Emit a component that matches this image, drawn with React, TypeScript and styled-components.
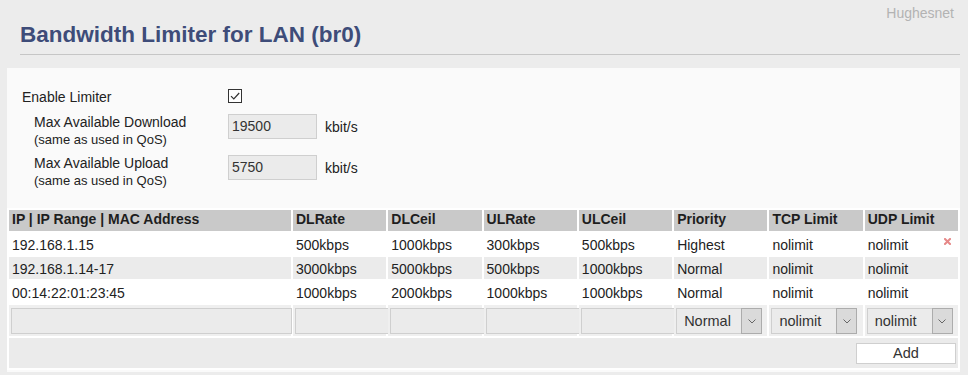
import { createGlobalStyle, styled } from 'styled-components';

const GlobalStyle = createGlobalStyle`
  html, body {
    margin: 0;
    padding: 0;
    background: #ececec;
  }
  body {
    font-family: 'Liberation Sans', Arial, sans-serif;
    color: #222;
  }
`;

type Rule = {
  address: string;
  dlRate: string;
  dlCeil: string;
  ulRate: string;
  ulCeil: string;
  priority: string;
  tcp: string;
  udp: string;
};

const rules: Rule[] = [
  { address: '192.168.1.15', dlRate: '500kbps', dlCeil: '1000kbps', ulRate: '300kbps', ulCeil: '500kbps', priority: 'Highest', tcp: 'nolimit', udp: 'nolimit' },
  { address: '192.168.1.14-17', dlRate: '3000kbps', dlCeil: '5000kbps', ulRate: '500kbps', ulCeil: '1000kbps', priority: 'Normal', tcp: 'nolimit', udp: 'nolimit' },
  { address: '00:14:22:01:23:45', dlRate: '1000kbps', dlCeil: '2000kbps', ulRate: '1000kbps', ulCeil: '1000kbps', priority: 'Normal', tcp: 'nolimit', udp: 'nolimit' },
];

const headings = ['IP | IP Range | MAC Address', 'DLRate', 'DLCeil', 'ULRate', 'ULCeil', 'Priority', 'TCP Limit', 'UDP Limit'];

function Chevron() {
  return (
    <svg width="8" height="5" viewBox="0 0 8 5">
      <path d="M0.5 0.5 L4 4 L7.5 0.5" fill="none" stroke="#666" strokeWidth="1" />
    </svg>
  );
}

function Check() {
  return (
    <svg width="12" height="12" viewBox="0 0 12 12">
      <path d="M2 6.2 L4.8 9 L10.2 3" fill="none" stroke="#333" strokeWidth="1.2" />
    </svg>
  );
}

function RemoveIcon() {
  return (
    <svg width="7" height="7" viewBox="0 0 7 7">
      <path d="M1 1 L6 6 M6 1 L1 6" stroke="#e68888" strokeWidth="2" strokeLinecap="square" />
    </svg>
  );
}

function Select({ value }: { value: string }) {
  return (
    <SelectBox>
      <SelectValue>{value}</SelectValue>
      <SelectArrow>
        <Chevron />
      </SelectArrow>
    </SelectBox>
  );
}

function App() {
  return (
    <Page>
      <GlobalStyle />
      <Header>
        <Brand>Hughesnet</Brand>
        <Title>Bandwidth Limiter for LAN (br0)</Title>
      </Header>

      <Panel>
        <Form>
          <FieldRow>
            <Label>Enable Limiter</Label>
            <CheckBox>
              <Check />
            </CheckBox>
          </FieldRow>
          <FieldRow $gap={7}>
            <Label $indent>
              Max Available Download
              <Hint>(same as used in QoS)</Hint>
            </Label>
            <Field>
              <NumberInput>19500</NumberInput>
              <Unit>kbit/s</Unit>
            </Field>
          </FieldRow>
          <FieldRow $gap={5}>
            <Label $indent>
              Max Available Upload
              <Hint>(same as used in QoS)</Hint>
            </Label>
            <Field>
              <NumberInput>5750</NumberInput>
              <Unit>kbit/s</Unit>
            </Field>
          </FieldRow>
        </Form>

        <RuleTable>
          <colgroup>
            <col style={{ width: 282 }} />
            {headings.slice(1).map((h) => (
              <col key={h} />
            ))}
          </colgroup>
          <thead>
            <tr>
              {headings.map((h) => (
                <HeadCell key={h}>{h}</HeadCell>
              ))}
            </tr>
          </thead>
          <tbody>
            {rules.map((r, i) => (
              <tr key={r.address}>
                <Cell $odd={i % 2 === 1}>{r.address}</Cell>
                <Cell $odd={i % 2 === 1}>{r.dlRate}</Cell>
                <Cell $odd={i % 2 === 1}>{r.dlCeil}</Cell>
                <Cell $odd={i % 2 === 1}>{r.ulRate}</Cell>
                <Cell $odd={i % 2 === 1}>{r.ulCeil}</Cell>
                <Cell $odd={i % 2 === 1}>{r.priority}</Cell>
                <Cell $odd={i % 2 === 1}>{r.tcp}</Cell>
                <Cell $odd={i % 2 === 1}>
                  <LastCellInner>
                    {r.udp}
                    {i === 0 && (
                      <Remove>
                        <RemoveIcon />
                      </Remove>
                    )}
                  </LastCellInner>
                </Cell>
              </tr>
            ))}
            <tr>
              {[0, 1, 2, 3, 4].map((k) => (
                <EditCell key={k}>
                  <TextBox $wide={k > 0} />
                </EditCell>
              ))}
              <EditCell>
                <Select value="Normal" />
              </EditCell>
              <EditCell>
                <Select value="nolimit" />
              </EditCell>
              <EditCell>
                <Select value="nolimit" />
              </EditCell>
            </tr>
            <tr>
              <ActionCell colSpan={8}>
                <AddButton>Add</AddButton>
              </ActionCell>
            </tr>
          </tbody>
        </RuleTable>
      </Panel>
    </Page>
  );
}

export default App;

const Page = styled.div`
  width: 968px;
  height: 375px;
  box-sizing: border-box;
  padding: 0 8px 0 7px;
  background: #ececec;
  overflow: hidden;
`;

const Header = styled.header`
  display: flex;
  flex-direction: column;
  padding-top: 5px;
  margin-bottom: 13px;
`;

const Brand = styled.div`
  align-self: flex-end;
  margin-right: 6px;
  font-size: 14px;
  line-height: 16px;
  color: #b3b3b3;
`;

const Title = styled.h1`
  margin: 1px 0 0 13px;
  padding-bottom: 6px;
  border-bottom: 1px solid #c6c6c6;
  font-size: 22.5px;
  line-height: 26px;
  font-weight: bold;
  color: #3e4c79;
`;

const Panel = styled.section`
  background: #fafafa;
  padding: 20px 0 2px;
`;

const Form = styled.div`
  display: flex;
  flex-direction: column;
  padding-left: 15px;
  margin-bottom: 18px;
`;

const FieldRow = styled.div<{ $gap?: number }>`
  display: grid;
  grid-template-columns: 206px auto;
  align-items: start;
  margin-top: ${(p) => p.$gap ?? 0}px;
`;

const Label = styled.div<{ $indent?: boolean }>`
  display: flex;
  flex-direction: column;
  padding-left: ${(p) => (p.$indent ? 12 : 0)}px;
  font-size: 14px;
  line-height: 18px;
  color: #222;
`;

const Hint = styled.span`
  font-size: 13px;
  line-height: 18px;
`;

const CheckBox = styled.span`
  display: flex;
  align-items: center;
  justify-content: center;
  width: 14px;
  height: 14px;
  margin-top: 1px;
  box-sizing: border-box;
  border: 1px solid #333;
  background: #fff;
`;

const Field = styled.div`
  display: flex;
  align-items: center;
  gap: 8px;
  margin-top: 1px;
`;

const NumberInput = styled.div`
  width: 89px;
  height: 25px;
  box-sizing: border-box;
  padding-left: 3px;
  border: 1px solid #cfcfcf;
  background: #ebebeb;
  font-size: 14px;
  line-height: 23px;
  color: #333;
`;

const Unit = styled.span`
  font-size: 14px;
  line-height: 16px;
  color: #222;
`;

const RuleTable = styled.table`
  width: 100%;
  table-layout: fixed;
  border-collapse: separate;
  border-spacing: 2px;
  background: #fff;
`;

const HeadCell = styled.th`
  height: 21px;
  box-sizing: border-box;
  padding: 1px 3px 3px;
  background: #c9c9c9;
  text-align: left;
  font-size: 14px;
  line-height: 17px;
  font-weight: bold;
  color: #1e1e1e;
  white-space: nowrap;
  overflow: hidden;
`;

const Cell = styled.td<{ $odd?: boolean }>`
  height: 22px;
  box-sizing: border-box;
  padding: 4px 3px 2px;
  background: ${(p) => (p.$odd ? '#ebebeb' : '#fff')};
  font-size: 14px;
  line-height: 16px;
  color: #222;
  white-space: nowrap;
`;

const LastCellInner = styled.div`
  display: flex;
  justify-content: space-between;
  align-items: flex-start;
`;

const Remove = styled.span`
  display: flex;
  margin: 1px 4px 0 0;
  line-height: 0;
`;

const EditCell = styled.td`
  height: 31px;
  box-sizing: border-box;
  padding: 3px 0 2px 2px;
  background: #efefef;
  vertical-align: top;
`;

const TextBox = styled.div<{ $wide?: boolean }>`
  width: calc(100% + ${(p) => (p.$wide ? 4 : 1)}px);
  height: 26px;
  box-sizing: border-box;
  border: 1px solid #cfcfcf;
  background: #ebebeb;
`;

const SelectBox = styled.div`
  display: flex;
  width: 86px;
  height: 26px;
  box-sizing: border-box;
  border: 1px solid #cfcfcf;
  background: #ebebeb;
`;

const SelectValue = styled.span`
  flex: 1;
  padding-left: 7px;
  font-size: 14.5px;
  line-height: 24px;
  color: #333;
`;

const SelectArrow = styled.span`
  display: flex;
  align-items: center;
  justify-content: center;
  width: 21px;
  margin: -1px -1px -1px 0;
  box-sizing: border-box;
  border: 1px solid #acacac;
  background: #dadada;
`;

const ActionCell = styled.td`
  height: 30px;
  box-sizing: border-box;
  padding: 5px 2px 4px;
  background: #ebebeb;
  text-align: right;
`;

const AddButton = styled.button`
  width: 100px;
  height: 21px;
  padding: 0;
  border: 1px solid #cfcfcf;
  background: #fff;
  font-family: 'Liberation Sans', Arial, sans-serif;
  font-size: 14.5px;
  line-height: 19px;
  color: #333;
  vertical-align: top;
`;
